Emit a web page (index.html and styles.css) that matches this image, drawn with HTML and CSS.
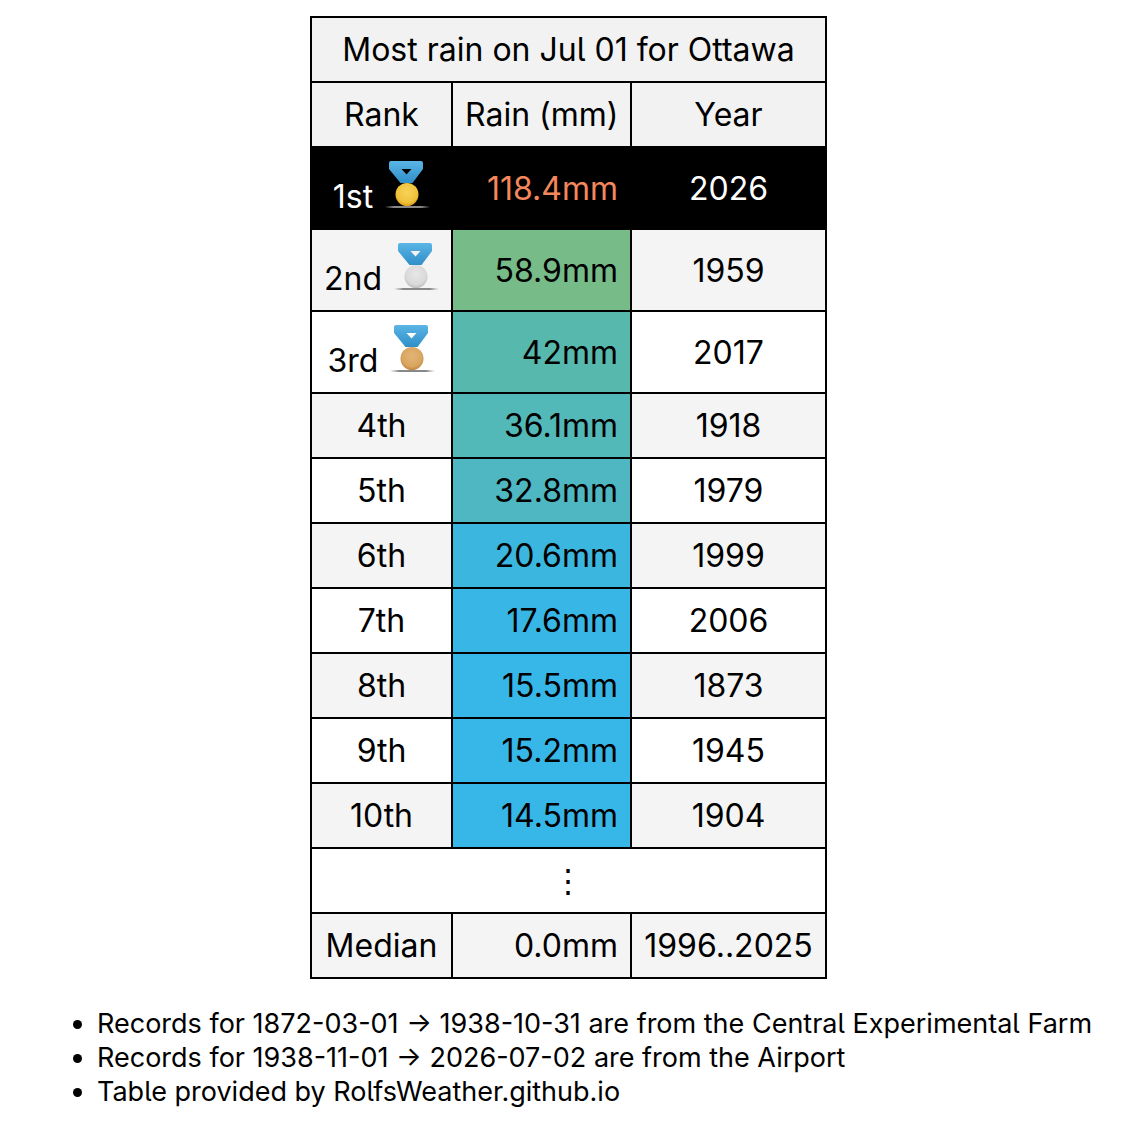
FILE: index.html
```html
<!DOCTYPE html>
<html>
<head>
<meta charset="utf-8">
<link rel="stylesheet" href="styles.css">
</head>
<body>
<svg class="defs" width="0" height="0" aria-hidden="true">
  <defs>
    <linearGradient id="shd" x1="0" x2="1"><stop offset="0" stop-color="#999" stop-opacity="0"/><stop offset="0.2" stop-color="#888"/><stop offset="0.8" stop-color="#888"/><stop offset="1" stop-color="#999" stop-opacity="0"/></linearGradient>
    <linearGradient id="rib" x1="0" y1="0" x2="0" y2="1"><stop offset="0" stop-color="#5bb5e6"/><stop offset="1" stop-color="#2f8fc8"/></linearGradient>
    <radialGradient id="gold" cx="0.5" cy="0.4" r="0.6"><stop offset="0" stop-color="#f7d35a"/><stop offset="0.75" stop-color="#f0c23c"/><stop offset="1" stop-color="#d99e1a"/></radialGradient>
    <radialGradient id="silver" cx="0.5" cy="0.4" r="0.6"><stop offset="0" stop-color="#e6e6e6"/><stop offset="0.75" stop-color="#d9d9d9"/><stop offset="1" stop-color="#bdbdbd"/></radialGradient>
    <radialGradient id="bronze" cx="0.5" cy="0.4" r="0.6"><stop offset="0" stop-color="#e3b476"/><stop offset="0.75" stop-color="#d9a560"/><stop offset="1" stop-color="#bd8440"/></radialGradient>
  </defs>
</svg>
<div class="page">
<table class="rank-table">
  <colgroup><col class="c1"><col class="c2"><col class="c3"></colgroup>
  <thead>
    <tr><th colspan="3" class="title">Most rain on Jul 01 for Ottawa</th></tr>
    <tr><th>Rank</th><th>Rain (mm)</th><th>Year</th></tr>
  </thead>
  <tbody>
    <tr class="first">
      <td class="rank">1st <svg class="medal" viewBox="0 0 48 48" width="48" height="48"><rect x="3" y="46" width="45" height="2" fill="url(#shd)"/><path fill-rule="evenodd" fill="url(#rib)" d="M9 1 H39 Q41 1 41 3 V9 L30.5 23 H18.5 L7 9 V3 Q7 1 9 1 Z M19.5 9 H29.5 L24.5 14.5 Z"/><circle cx="25" cy="34.5" r="11.5" fill="url(#gold)"/></svg></td>
      <td class="rain top">118.4mm</td>
      <td>2026</td>
    </tr>
    <tr class="alt">
      <td class="rank">2nd <svg class="medal" viewBox="0 0 48 48" width="48" height="48"><rect x="3" y="46" width="45" height="2" fill="url(#shd)"/><path fill-rule="evenodd" fill="url(#rib)" d="M9 1 H39 Q41 1 41 3 V9 L30.5 23 H18.5 L7 9 V3 Q7 1 9 1 Z M19.5 9 H29.5 L24.5 14.5 Z"/><circle cx="25" cy="34.5" r="11.5" fill="url(#silver)"/></svg></td>
      <td class="rain" style="background:#76bb88">58.9mm</td>
      <td>1959</td>
    </tr>
    <tr>
      <td class="rank">3rd <svg class="medal" viewBox="0 0 48 48" width="48" height="48"><rect x="3" y="46" width="45" height="2" fill="url(#shd)"/><path fill-rule="evenodd" fill="url(#rib)" d="M9 1 H39 Q41 1 41 3 V9 L30.5 23 H18.5 L7 9 V3 Q7 1 9 1 Z M19.5 9 H29.5 L24.5 14.5 Z"/><circle cx="25" cy="34.5" r="11.5" fill="url(#bronze)"/></svg></td>
      <td class="rain" style="background:#57b9ad">42mm</td>
      <td>2017</td>
    </tr>
    <tr class="alt"><td>4th</td><td class="rain" style="background:#52b8b8">36.1mm</td><td>1918</td></tr>
    <tr><td>5th</td><td class="rain" style="background:#4eb7c1">32.8mm</td><td>1979</td></tr>
    <tr class="alt"><td>6th</td><td class="rain" style="background:#3bb6df">20.6mm</td><td>1999</td></tr>
    <tr><td>7th</td><td class="rain" style="background:#38b7e7">17.6mm</td><td>2006</td></tr>
    <tr class="alt"><td>8th</td><td class="rain" style="background:#37b7e8">15.5mm</td><td>1873</td></tr>
    <tr><td>9th</td><td class="rain" style="background:#37b7e8">15.2mm</td><td>1945</td></tr>
    <tr class="alt"><td>10th</td><td class="rain" style="background:#37b7e8">14.5mm</td><td>1904</td></tr>
    <tr><td colspan="3" class="dots">⋮</td></tr>
    <tr class="alt"><td>Median</td><td class="rain">0.0mm</td><td>1996..2025</td></tr>
  </tbody>
</table>
<ul class="notes">
  <li>Records for 1872-03-01 → 1938-10-31 are from the Central Experimental Farm</li>
  <li>Records for 1938-11-01 → 2026-07-02 are from the Airport</li>
  <li>Table provided by RolfsWeather.github.io</li>
</ul>
</div>
</body>
</html>
```

FILE: styles.css
```css
body {
  margin: 8px;
  background: #fff;
  color: #000;
  font-family: Inter, "Noto Sans", sans-serif;
  font-feature-settings: "cv05";
}
.defs {
  position: absolute;
  width: 0;
  height: 0;
  overflow: hidden;
}
.page {
  display: flex;
  flex-direction: column;
  align-items: center;
  padding-top: 8px;
}
.rank-table {
  border-collapse: collapse;
  table-layout: fixed;
  width: 515px;
  font-size: 32px;
  border: 2px solid #000;
}
.c1 { width: 141px; }
.c2 { width: 179px; }
.c3 { width: 195px; }
.rank-table th,
.rank-table td {
  border: 2px solid #000;
  padding: 12px 12px;
  text-align: center;
  font-weight: normal;
  white-space: nowrap;
}
.rank-table th {
  background: #f2f2f2;
}
.rank-table tr.alt td {
  background: #f4f4f4;
}
.rank-table td.rain {
  text-align: right;
}
.rank-table tr.first td {
  background: #000;
  color: #fff;
}
.rank-table tr.first td.top {
  color: #f4875c;
}
.medal {
  vertical-align: baseline;
}
.dots {
  background: #fff;
}
.notes {
  align-self: stretch;
  margin: 28px 0 0 0;
  padding-left: 89px;
  font-size: 27px;
  line-height: 34px;
}
```
